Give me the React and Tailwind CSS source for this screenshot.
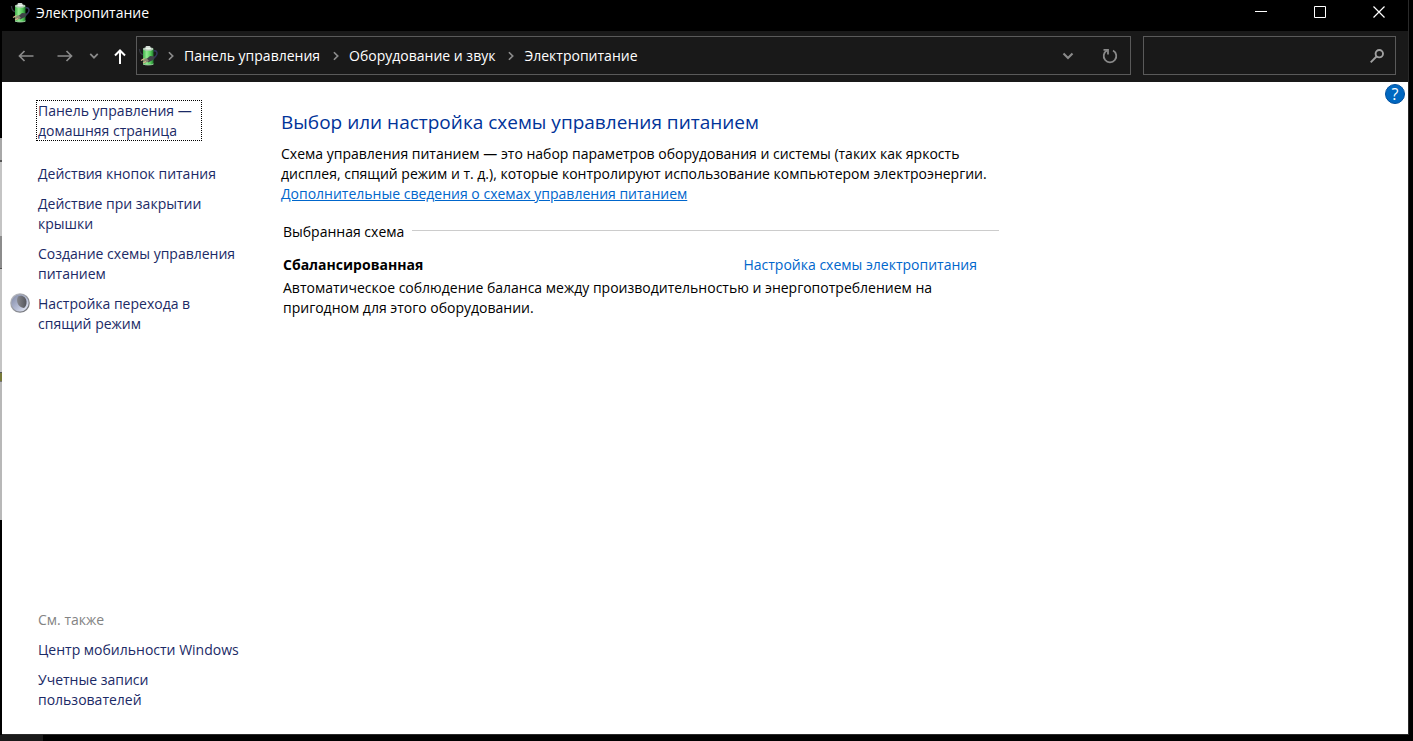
import { useState } from "react";

const crumbs = ["Панель управления", "Оборудование и звук", "Электропитание"];

const tasks = [
  { text: "Действия кнопок питания" },
  { text: "Действие при закрытии крышки" },
  { text: "Создание схемы управления питанием" },
  { text: "Настройка перехода в спящий режим", icon: true },
];

const related = ["Центр мобильности Windows", "Учетные записи пользователей"];

function BatteryIcon() {
  return (
    <svg width="20" height="20" viewBox="0 0 20 20" className="shrink-0">
      <defs>
        <linearGradient id="battery" x1="0" x2="1" y1="0" y2="0">
          <stop offset="0" stopColor="#3fae4a" />
          <stop offset="0.35" stopColor="#93ea90" />
          <stop offset="0.7" stopColor="#55cc5a" />
          <stop offset="1" stopColor="#1f7a2c" />
        </linearGradient>
      </defs>
      <path d="M1.500 3c0 3 1 5 4 6" fill="none" stroke="#34363f" strokeWidth="1.3" />
      <path d="M15 5c4-1 4.500 2 3.500 4s-3 3-4 5" fill="none" stroke="#34345c" strokeWidth="1.5" />
      <rect x="7.500" y="0" width="5" height="3" rx="1.200" fill="#d6dcd8" />
      <rect x="5" y="2" width="10.500" height="17" rx="1.500" fill="url(#battery)" />
      <ellipse cx="10.200" cy="3" rx="5.200" ry="1.800" fill="#b4cbb7" />
      <ellipse cx="10.200" cy="2.500" rx="3" ry="1" fill="#eef5ee" />
      <path d="M5 18c2 1.300 8.500 1.300 10.500 0" fill="none" stroke="#9cc9a0" />
      <path d="M8 13.500l4-3.500 5 .5-2 3.500-5 2.500z" fill="#3f4247" />
      <path d="M4.500 14.500l4-2.500 2.500 3-4 2z" fill="#8c8a72" />
      <path d="M3 14.500l3.500-2M5 17l3-1.500" stroke="#d8b890" strokeWidth="1.200" />
    </svg>
  );
}

function MoonIcon() {
  return (
    <svg width="20" height="20" viewBox="0 0 20 20">
      <defs>
        <linearGradient id="moonRim" x1="0" x2="1" y1="0" y2="1">
          <stop offset="0" stopColor="#c4c6cc" />
          <stop offset="1" stopColor="#66686e" />
        </linearGradient>
        <linearGradient id="moonLight" x1="0" x2="1" y1="0" y2="1">
          <stop offset="0" stopColor="#7f87a3" />
          <stop offset="0.6" stopColor="#b9c0d8" />
          <stop offset="1" stopColor="#eef1f8" />
        </linearGradient>
        <linearGradient id="moonDark" x1="0" x2="1" y1="0" y2="0">
          <stop offset="0" stopColor="#85868c" />
          <stop offset="1" stopColor="#55565c" />
        </linearGradient>
      </defs>
      <circle cx="10" cy="10" r="9.800" fill="url(#moonRim)" />
      <circle cx="10" cy="10" r="8.600" fill="url(#moonLight)" />
      <path d="M8 3.500c4-2 8 .5 8.500 5 .3 3-1 5.500-2.500 6.500-3-.5-5.500-2-6.500-5-.8-2.500-.5-4.500.5-6.500z" fill="url(#moonDark)" />
    </svg>
  );
}

function ArrowIcon({ className }) {
  return (
    <svg width="16" height="16" viewBox="0 0 16 16" fill="none" stroke="currentColor" strokeWidth="1.700" className={className}>
      <path d="M15.500 8H1.500M6.500 3L1.500 8L6.500 13" />
    </svg>
  );
}

function ChevronIcon({ className }) {
  return (
    <svg width="12" height="12" viewBox="0 0 12 12" fill="none" stroke="currentColor" strokeWidth="2.100" className={className}>
      <path d="M1.500 3.500L6 8L10.500 3.500" />
    </svg>
  );
}

function TitleBar() {
  return (
    <header className="flex h-[31px] items-start bg-black pl-2 text-white">
      <div className="flex h-[26px] items-center gap-[6px]">
        <BatteryIcon />
        <h1>Электропитание</h1>
      </div>
      <div className="ml-auto flex h-6">
        <button aria-label="Свернуть" className="flex w-[59px] items-center justify-center">
          <svg width="12" height="12" viewBox="0 0 12 12" stroke="currentColor">
            <path d="M0 5.500H12" />
          </svg>
        </button>
        <button aria-label="Развернуть" className="flex w-[59px] items-center justify-center">
          <svg width="12" height="12" viewBox="0 0 12 12" fill="none" stroke="currentColor">
            <path d="M.5.500H11.500V11.500H.5z" />
          </svg>
        </button>
        <button aria-label="Закрыть" className="flex w-[59px] items-center justify-center">
          <svg width="12" height="12" viewBox="0 0 12 12" fill="none" stroke="currentColor" strokeWidth="1.200">
            <path d="M.5.500L11.500 11.500M11.500.500L.5 11.500" />
          </svg>
        </button>
      </div>
    </header>
  );
}

function Toolbar() {
  const [query, setQuery] = useState("");

  return (
    <div className="flex h-[51px] items-start gap-3 bg-[#191919] pt-[5px] pr-3 pl-4">
      <div className="flex min-w-0 flex-1">
        <nav className="flex h-[39px] w-[118px] shrink-0 items-center text-[#8a8a8a]">
          <button aria-label="Назад">
            <ArrowIcon />
          </button>
          <button aria-label="Вперед" className="ml-[23px]">
            <ArrowIcon className="rotate-180" />
          </button>
          <button aria-label="Последние расположения" className="ml-4">
            <ChevronIcon className="size-[10px]" />
          </button>
          <button aria-label="Вверх" className="ml-3 text-white">
            <svg width="16" height="16" viewBox="0 0 16 16" fill="none" stroke="currentColor" strokeWidth="2">
              <path d="M9 16V2.500M4 7.500L9 2.500L14 7.500" />
            </svg>
          </button>
        </nav>
        <div className="flex h-[39px] min-w-0 flex-1 items-center border border-[#5a5a5a] pr-3 pl-px">
          <BatteryIcon />
          <ol className="flex items-center gap-[3px] text-white">
            {crumbs.map((crumb) => (
              <li key={crumb} className="flex items-center">
                <ChevronIcon className="mx-2 size-[10px] -rotate-90 text-[#8a8a8a]" />
                <a href="#">{crumb}</a>
              </li>
            ))}
          </ol>
          <button aria-label="Предыдущие расположения" className="ml-auto text-[#8a8a8a]">
            <ChevronIcon />
          </button>
          <button aria-label="Обновить" className="ml-7 text-[#8a8a8a]">
            <svg width="16" height="16" viewBox="0 0 16 16" fill="none" stroke="currentColor" strokeWidth="1.800">
              <path d="M11 2.500A6.300 6.300 0 1 1 5 2.500" />
              <path d="M1.500 1.800H6V6.500" />
            </svg>
          </button>
        </div>
      </div>
      <label className="flex h-[39px] w-[253px] items-center border border-[#5a5a5a] pr-[11px] pl-2 text-[#a0a0a0]">
        <input
          type="search"
          aria-label="Поиск"
          value={query}
          onChange={(e) => setQuery(e.target.value)}
          className="min-w-0 flex-1 bg-transparent text-white outline-none"
        />
        <svg width="14" height="14" viewBox="0 0 14 14" fill="none" stroke="currentColor" strokeWidth="1.900">
          <circle cx="9.300" cy="4.700" r="3.700" />
          <path d="M6.500 7.500L.7 13.300" />
        </svg>
      </label>
    </div>
  );
}

function Sidebar() {
  return (
    <aside className="flex w-[279px] shrink-0 flex-col pt-[18px] pr-9 pb-6 pl-9 text-[#1b2a66]">
      <a
        href="#"
        className="-ml-[2px] self-start pt-px pr-[10px] pl-[2px] outline-1 -outline-offset-1 outline-black outline-dotted"
      >
        Панель управления —
        <br />
        домашняя страница
      </a>
      <ul className="mt-[23px] flex flex-col gap-[10px]">
        {tasks.map((task) => (
          <li key={task.text} className="relative">
            {task.icon && (
              <span className="absolute -top-px -left-7">
                <MoonIcon />
              </span>
            )}
            <a href="#">{task.text}</a>
          </li>
        ))}
      </ul>
      <div className="mt-auto">
        <h2 className="text-[#838383]">См. также</h2>
        <ul className="mt-[10px] flex flex-col gap-[10px]">
          {related.map((item) => (
            <li key={item}>
              <a href="#">{item}</a>
            </li>
          ))}
        </ul>
      </div>
    </aside>
  );
}

function PowerPlans() {
  return (
    <main className="max-w-[720px] flex-1 pt-7 text-black">
      <h2 className="text-[19px] leading-6 text-[#003399]">
        Выбор или настройка схемы управления питанием
      </h2>
      <p className="mt-[10px] whitespace-nowrap">
        Схема управления питанием — это набор параметров оборудования и системы (таких как яркость
        <br />
        дисплея, спящий режим и т. д.), которые контролируют использование компьютером электроэнергии.
      </p>
      <a href="#" className="block w-fit text-[#0066cc] underline">
        Дополнительные сведения о схемах управления питанием
      </a>
      <section className="mt-[18px] px-[2px]">
        <div className="flex items-center gap-2">
          <h3>Выбранная схема</h3>
          <div className="mb-1 h-px flex-1 bg-[#cccccc]" />
        </div>
        <div className="mt-[13px] flex justify-between pr-[22px]">
          <h4 className="font-bold">Сбалансированная</h4>
          <a href="#" className="text-[#0066cc]">
            Настройка схемы электропитания
          </a>
        </div>
        <p className="mt-[3px]">
          Автоматическое соблюдение баланса между производительностью и энергопотреблением на
          <br />
          пригодном для этого оборудовании.
        </p>
      </section>
    </main>
  );
}

// sliver of the window that lies behind this one
function BackdropEdge() {
  return (
    <div className="flex w-[2px] shrink-0 flex-col bg-black">
      <div className="mt-[138px] h-[22px] bg-[#a8a8a8]" />
      <div className="h-[76px] border-t-2 border-[#555555] bg-[#c4c4c4]" />
      <div className="h-8 bg-[#8c8c8c]" />
      <div className="h-[105px] border-y border-[#555555] bg-[#c4c4c4]" />
      <div className="h-2 bg-[#77793a]" />
      <div className="h-[139px] border-t border-[#777777] bg-[#b8b8b8]" />
    </div>
  );
}

export default function App() {
  return (
    <div className="flex min-h-screen flex-col bg-black font-['Open_Sans','Noto_Sans',sans-serif] text-[14px] leading-5">
      <div className="flex flex-1">
        <BackdropEdge />
        <div className="mr-1 flex min-w-0 flex-1 flex-col border-r border-b border-[#2a2a2a]">
          <TitleBar />
          <Toolbar />
          <div className="relative flex flex-1 bg-white">
            <Sidebar />
            <PowerPlans />
            <button
              aria-label="Справка"
              className="absolute top-[2px] right-[3px] flex size-5 items-center justify-center rounded-full border border-[#004f9e] bg-[#0067c0] text-[16px] leading-5 text-white"
            >
              ?
            </button>
          </div>
        </div>
      </div>
      <div className="h-[6px] w-[43px] bg-[#1a1a1a]" />
    </div>
  );
}
